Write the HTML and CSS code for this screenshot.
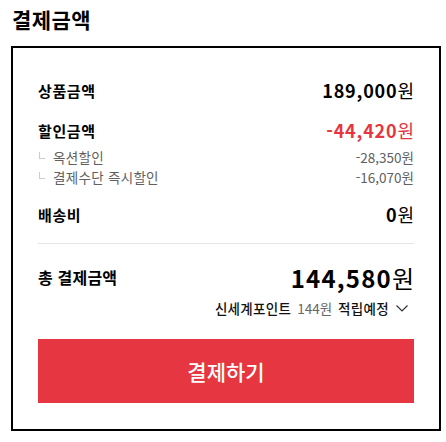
FILE: index.html
```html
<!DOCTYPE html>
<html lang="ko">
<head>
<meta charset="utf-8">
<link rel="stylesheet" href="styles.css">
</head>
<body>
<div class="page">
  <h2 class="title">결제금액</h2>
  <div class="box">
    <div class="row">
      <span class="label">상품금액</span>
      <span class="amount">189,000<span class="won">원</span></span>
    </div>
    <div class="row row-discount">
      <span class="label">할인금액</span>
      <span class="amount red">-44,420<span class="won">원</span></span>
    </div>
    <div class="subs">
      <div class="sub"><span class="sub-label"><i class="corner"></i>옥션할인</span><span class="sub-amount">-28,350원</span></div>
      <div class="sub"><span class="sub-label"><i class="corner"></i>결제수단 즉시할인</span><span class="sub-amount">-16,070원</span></div>
    </div>
    <div class="row row-ship">
      <span class="label">배송비</span>
      <span class="amount">0<span class="won">원</span></span>
    </div>
    <div class="divider"></div>
    <div class="row row-total">
      <span class="label-total">총 결제금액</span>
      <span class="amount-total">144,580<span class="won">원</span></span>
    </div>
    <div class="points">
      <span class="pt-name">신세계포인트</span>
      <span class="pt-val">144원</span>
      <span class="pt-name">적립예정</span>
      <svg class="chev" width="14" height="10" viewBox="0 0 14 10"><path d="M1.5 2.5 L7 8 L12.5 2.5" fill="none" stroke="#333" stroke-width="1.2"/></svg>
    </div>
    <button class="pay">결제하기</button>
  </div>
</div>
</body>
</html>
```
FILE: styles.css
```css
* { box-sizing: border-box; }
body {
  margin: 0;
  background: #fff;
  font-family: "Noto Sans CJK KR", "Noto Sans", sans-serif;
  color: #000;
}
.page {
  padding: 0 5px 0 11px;
}
.title {
  margin: 5px 0 13px 0;
  font-size: 21px;
  line-height: 28px;
  font-weight: 700;
  letter-spacing: 0.4px;
  padding-left: 1px;
}
.box {
  border: 2px solid #000;
  padding: 30px 25px 26px;
  display: flex;
  flex-direction: column;
}
.row {
  display: flex;
  justify-content: space-between;
  align-items: center;
  height: 24px;
}
.row-discount { margin-top: 16px; }
.row-ship { margin-top: 15px; }
.label {
  font-size: 15px;
  font-weight: 700;
  letter-spacing: 0.6px;
}
.amount {
  font-size: 18px;
  font-weight: 700;
  letter-spacing: 0.8px;
}
.won { font-weight: 400; letter-spacing: 0; }
.red { color: #e5363f; }
.subs {
  margin-top: 5px;
  display: flex;
  flex-direction: column;
}
.sub {
  display: flex;
  justify-content: space-between;
  align-items: center;
  height: 20px;
  font-size: 13.5px;
  color: #606060;
}
.sub-label {
  display: flex;
  align-items: center;
  letter-spacing: 0.3px;
}
.corner {
  display: inline-block;
  width: 6px;
  height: 7px;
  border-left: 1px solid #ccc;
  border-bottom: 1px solid #ccc;
  margin: -4px 8px 0 1px;
}
.divider {
  margin-top: 17px;
  height: 1px;
  background: #e5e5e5;
}
.row-total {
  margin-top: 17px;
  height: 32px;
}
.label-total {
  font-size: 16px;
  font-weight: 700;
  letter-spacing: 0.2px;
}
.amount-total {
  font-size: 24px;
  font-weight: 700;
  letter-spacing: 1.2px;
}
.points {
  margin-top: 5px;
  height: 20px;
  display: flex;
  justify-content: flex-end;
  align-items: center;
  gap: 6px;
  font-size: 13.5px;
}
.pt-name { font-weight: 500; color: #111; letter-spacing: 0.3px; }
.pt-val { color: #666; }
.chev { margin-left: 0; margin-right: 5px; }
.pay {
  margin-top: 21px;
  height: 64px;
  width: 100%;
  border: none;
  background: #e53641;
  color: #fff;
  font-family: inherit;
  font-size: 21px;
  font-weight: 500;
  cursor: pointer;
}
```
